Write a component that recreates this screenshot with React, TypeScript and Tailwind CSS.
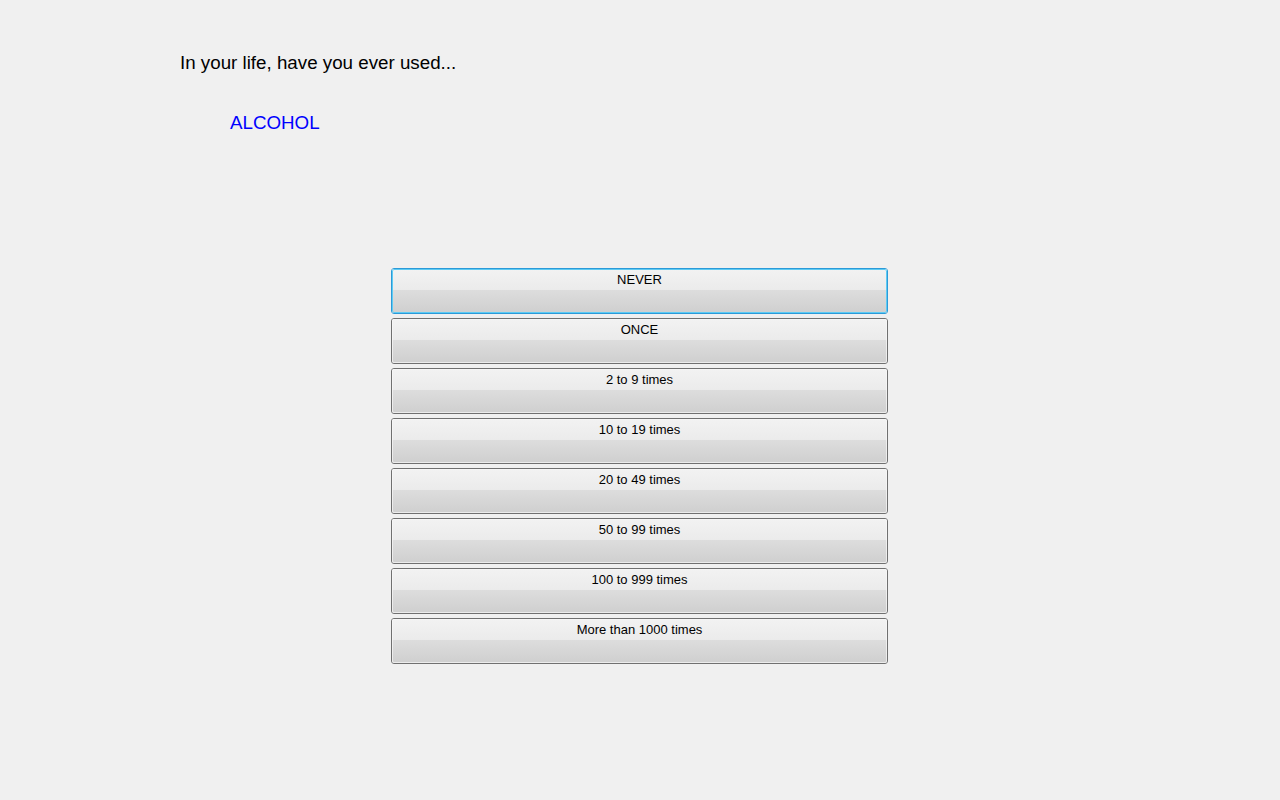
const options = [
  "NEVER",
  "ONCE",
  "2 to 9 times",
  "10 to 19 times",
  "20 to 49 times",
  "50 to 99 times",
  "100 to 999 times",
  "More than 1000 times",
]

export default function App() {
  return (
    <div className="min-h-[800px] w-full bg-[#f0f0f0] font-['Liberation_Sans',Arial,sans-serif]">
      {/* Question */}
      <div className="pl-[180px] pt-[52px]">
        <p className="text-[18.75px] leading-[22px] text-black">In your life, have you ever used...</p>
        <p className="mt-[38px] pl-[50px] text-[18.75px] leading-[22px] text-[#0000ff]">ALCOHOL</p>
      </div>

      {/* Answer buttons */}
      <div className="ml-[391px] mt-[134px] flex w-[497px] flex-col gap-[4px]">
        {options.map((label, i) => (
          <button
            key={label}
            className={
              i === 0
                ? "relative h-[46px] w-full overflow-hidden rounded-[3px] border border-[#2c9ad8] text-[13px] text-black"
                : "relative h-[46px] w-full overflow-hidden rounded-[3px] border border-[#707070] text-[13px] text-black"
            }
          >
            <div className="flex h-full flex-col">
              <div className="h-[21px] bg-gradient-to-b from-[#f2f2f2] to-[#ebebeb]" />
              <div className="flex-1 bg-gradient-to-b from-[#dddddd] to-[#cfcfcf]" />
            </div>
            <div
              className={
                i === 0
                  ? "absolute inset-0 rounded-[2px] border border-[#5ecbf3]"
                  : "absolute inset-0 rounded-[2px] border border-[#f8f8f8]/70"
              }
            />
            <span className="absolute inset-x-0 top-[3px] leading-[16px]">{label}</span>
          </button>
        ))}
      </div>
    </div>
  )
}
